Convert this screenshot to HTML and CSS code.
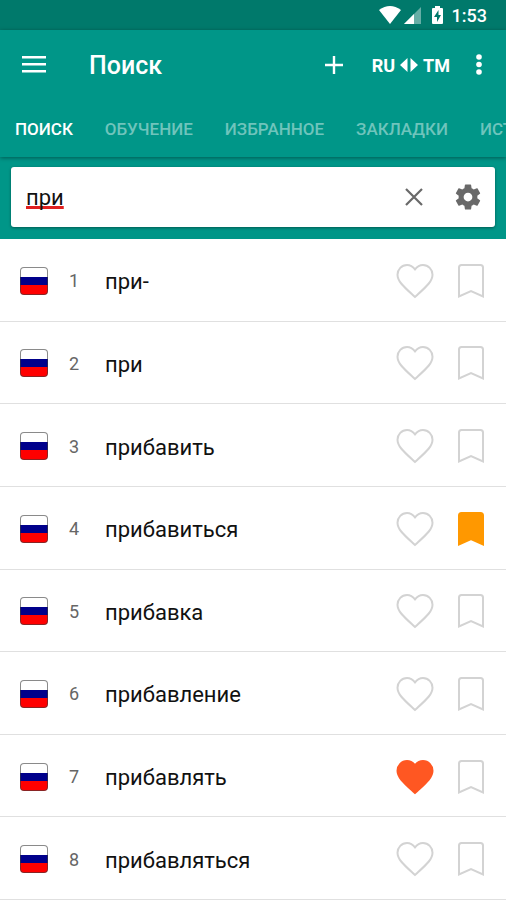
FILE: index.html
```html
<!DOCTYPE html>
<html lang="ru">
<head>
<meta charset="utf-8">
<meta name="viewport" content="width=device-width, initial-scale=1">
<title>Поиск</title>
<link rel="stylesheet" href="styles.css">
</head>
<body>
<svg class="symbols" aria-hidden="true">
  <symbol id="heart" viewBox="0 0 38 36">
    <path d="M19 34L16.5 31.7C7 23 1.5 18 1.5 11.7C1.5 6.3 5.7 2 11 2C14.2 2 17.1 3.8 19 6.3C20.9 3.8 23.8 2 27 2C32.3 2 36.5 6.3 36.5 11.7C36.5 18 31 23 21.5 31.7Z"/>
  </symbol>
  <symbol id="bookmark" viewBox="0 0 28 36">
    <path d="M2 33.5V4.5Q2 2 4.5 2H23.500Q26 2 26 4.500V33.500L14 28Z"/>
  </symbol>
</svg>
<div class="status">
  <svg width="22" height="18" viewBox="0 0 22 18"><path fill="#fff" d="M0 4Q11-4 22 4L11 18Z"/></svg>
  <svg width="17" height="17" viewBox="0 0 17 17"><path fill="#fff" opacity=".4" d="M17 0V17H0Z"/><path fill="#fff" d="M10 7V17H0Z"/></svg>
  <svg class="battery" width="11" height="18" viewBox="0 0 11 18"><path fill="#fff" d="M3 0h5v2h2q1 0 1 1v14q0 1-1 1H1q-1 0-1-1V3q0-1 1-1h2Z"/><path fill="#00796b" d="M6.500 4L2 11h3v5l4-7H6.500Z"/></svg>
  <span>1:53</span>
</div>
<header class="header">
  <div class="bar">
    <button class="icon" aria-label="Меню"><svg width="24" height="18" viewBox="0 0 24 18"><path fill="#fff" d="M0 0h24v2.500H0zM0 7h24v2.500H0zM0 14h24v2.500H0z"/></svg></button>
    <h1>Поиск</h1>
    <button class="icon" aria-label="Добавить"><svg width="18" height="18" viewBox="0 0 18 18"><path stroke="#fff" stroke-width="2.400" d="M9 0v18M0 9h18"/></svg></button>
    <button class="lang"><span>RU</span><svg width="18" height="14" viewBox="0 0 18 14"><path fill="#fff" d="M7.500 0v14L0 7zM10.500 0v14L18 7z"/></svg><span>TM</span></button>
    <button class="icon more" aria-label="Ещё"><svg width="6" height="22" viewBox="0 0 6 22"><g fill="#fff"><circle cx="3" cy="3" r="2.800"/><circle cx="3" cy="10.500" r="2.800"/><circle cx="3" cy="18" r="2.800"/></g></svg></button>
  </div>
  <nav class="tabs">
    <a class="active" href="#">ПОИСК</a>
    <a href="#">ОБУЧЕНИЕ</a>
    <a href="#">ИЗБРАННОЕ</a>
    <a href="#">ЗАКЛАДКИ</a>
    <a href="#">ИСТОРИЯ</a>
  </nav>
</header>
<div class="search">
  <form class="box">
    <input type="text" value="при" aria-label="Поиск слова" spellcheck="false">
    <button class="icon" type="button" aria-label="Очистить"><svg width="18" height="18" viewBox="0 0 18 18"><path stroke="#696969" stroke-width="2.200" d="M1 1l16 16M17 1L1 17"/></svg></button>
    <button class="icon" type="button" aria-label="Настройки"><svg width="30" height="30" viewBox="0 0 24 24"><path fill="#696969" d="M19.430 12.980c.040-.320.070-.640.070-.980s-.030-.660-.070-.980l2.110-1.650c.190-.150.240-.420.120-.640l-2-3.460c-.120-.220-.390-.300-.610-.220l-2.490 1c-.520-.400-1.080-.730-1.690-.980l-.380-2.650C14.460 2.180 14.250 2 14 2h-4c-.250 0-.460.180-.490.420l-.380 2.650c-.610.250-1.170.590-1.690.980l-2.490-1c-.230-.090-.490 0-.610.220l-2 3.460c-.130.220-.070.490.120.640l2.110 1.650c-.040.320-.070.650-.070.980s.030.660.070.980l-2.110 1.650c-.190.150-.240.420-.120.640l2 3.460c.120.220.390.300.610.220l2.490-1c.520.400 1.080.730 1.690.980l.380 2.650c.030.240.240.420.490.420h4c.250 0 .460-.180.490-.420l.380-2.650c.610-.250 1.170-.590 1.690-.980l2.490 1c.230.090.490 0 .610-.220l2-3.460c.120-.220.070-.490-.120-.640zM12 15.500A3.500 3.500 0 1 1 12 8.500 3.500 3.500 0 0 1 12 15.500z"/></svg></button>
  </form>
</div>
<ol class="list">
  <li><span class="flag"></span><span class="num">1</span><span class="word">при-</span><button aria-label="В избранное"><svg class="heart"><use href="#heart"/></svg></button><button aria-label="Закладка"><svg class="mark"><use href="#bookmark"/></svg></button></li>
  <li><span class="flag"></span><span class="num">2</span><span class="word">при</span><button aria-label="В избранное"><svg class="heart"><use href="#heart"/></svg></button><button aria-label="Закладка"><svg class="mark"><use href="#bookmark"/></svg></button></li>
  <li><span class="flag"></span><span class="num">3</span><span class="word">прибавить</span><button aria-label="В избранное"><svg class="heart"><use href="#heart"/></svg></button><button aria-label="Закладка"><svg class="mark"><use href="#bookmark"/></svg></button></li>
  <li><span class="flag"></span><span class="num">4</span><span class="word">прибавиться</span><button aria-label="В избранное"><svg class="heart"><use href="#heart"/></svg></button><button aria-label="Закладка"><svg class="mark on"><use href="#bookmark"/></svg></button></li>
  <li><span class="flag"></span><span class="num">5</span><span class="word">прибавка</span><button aria-label="В избранное"><svg class="heart"><use href="#heart"/></svg></button><button aria-label="Закладка"><svg class="mark"><use href="#bookmark"/></svg></button></li>
  <li><span class="flag"></span><span class="num">6</span><span class="word">прибавление</span><button aria-label="В избранное"><svg class="heart"><use href="#heart"/></svg></button><button aria-label="Закладка"><svg class="mark"><use href="#bookmark"/></svg></button></li>
  <li><span class="flag"></span><span class="num">7</span><span class="word">прибавлять</span><button aria-label="В избранное"><svg class="heart on"><use href="#heart"/></svg></button><button aria-label="Закладка"><svg class="mark"><use href="#bookmark"/></svg></button></li>
  <li><span class="flag"></span><span class="num">8</span><span class="word">прибавляться</span><button aria-label="В избранное"><svg class="heart"><use href="#heart"/></svg></button><button aria-label="Закладка"><svg class="mark"><use href="#bookmark"/></svg></button></li>
</ol>
</body>
</html>
```
FILE: styles.css
```css
* { box-sizing: border-box; }
body {
  margin: 0;
  min-height: 100vh;
  display: flex;
  flex-direction: column;
  font-family: Roboto, sans-serif;
  background: #fff;
  color: #111;
}
svg { display: block; flex: none; }
button {
  border: 0;
  padding: 0;
  background: none;
  color: inherit;
  font: inherit;
  cursor: pointer;
}
.symbols { display: none; }

.status {
  height: 30px;
  padding: 0 19px;
  display: flex;
  align-items: center;
  justify-content: flex-end;
  gap: 3px;
  background: #00796b;
  color: #fff;
  font-size: 18px;
  font-weight: 500;
}
.battery { margin: 0 6px 0 8px; }

.header {
  position: relative;
  background: #009688;
  color: #fff;
  box-shadow: 0 1px 4px rgba(0, 0, 0, .4);
}
.bar {
  height: 70px;
  padding: 0 16px;
  display: flex;
  align-items: center;
}
.icon {
  width: 36px;
  height: 40px;
  display: flex;
  align-items: center;
  justify-content: center;
}
.bar h1 {
  flex: 1;
  margin: 0 0 0 37px;
  font-size: 25px;
  font-weight: 500;
}
.lang {
  margin: 0 18px 0 20px;
  display: flex;
  align-items: center;
  gap: 5px;
  font-size: 18px;
  font-weight: 700;
}
.more { width: 22px; }
.tabs {
  height: 57px;
  padding: 0 15px;
  display: flex;
  align-items: center;
  gap: 32px;
  overflow: hidden;
  white-space: nowrap;
  font-size: 17px;
  font-weight: 500;
}
.tabs a {
  color: #6fc4bc;
  text-decoration: none;
}
.tabs .active { color: #fff; }

.search {
  padding: 10px 11px 12px;
  background: #009688;
}
.box {
  height: 60px;
  padding: 0 9px 0 15px;
  display: flex;
  align-items: center;
  gap: 18px;
  background: #fff;
  border-radius: 3px;
  box-shadow: 0 1px 3px rgba(0, 0, 0, .4);
}
.box input {
  flex: 1;
  min-width: 0;
  padding: 0;
  border: 0;
  outline: 0;
  background: none;
  color: #111;
  font: 22px Roboto, sans-serif;
  text-decoration: underline 3px #e02020;
  text-decoration-skip-ink: none;
  text-underline-offset: 1px;
}

.list {
  flex: 1;
  margin: 0;
  padding: 0;
  display: grid;
  grid-auto-rows: 1fr;
  list-style: none;
}
.list li {
  min-height: 82px;
  padding: 2px 21px 0 20px;
  display: flex;
  align-items: center;
  border-bottom: 1px solid #e0e0e0;
}
.flag {
  width: 28px;
  height: 28px;
  border: 1px solid rgba(60, 60, 60, .6);
  border-radius: 4px;
  background: linear-gradient(#fff 34%, #00008b 34% 66%, #f00 66%) border-box;
}
.num {
  width: 52px;
  text-align: center;
  color: #666;
  font-size: 18px;
}
.word {
  flex: 1;
  padding: 2px 0 0 5px;
  font-size: 22px;
}
.list button { margin-left: 23px; }
.heart, .mark {
  height: 36px;
  fill: none;
  stroke: #d3d3d3;
  stroke-width: 2px;
}
.heart { width: 38px; }
.mark { width: 28px; }
.heart.on { fill: #ff5722; stroke: #ff5722; }
.mark.on { fill: #ff9800; stroke: #ff9800; }
```
